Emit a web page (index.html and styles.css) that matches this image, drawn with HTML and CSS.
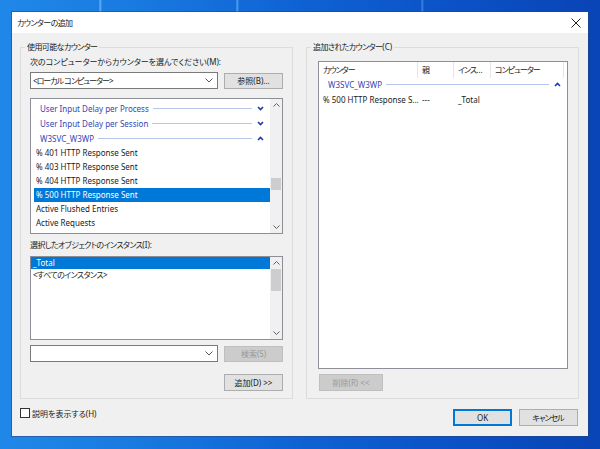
FILE: index.html
```html
<!DOCTYPE html>
<html lang="ja">
<head>
<meta charset="utf-8">
<title>カウンターの追加</title>
<link rel="stylesheet" href="styles.css">
</head>
<body>
<div class="desktop">
  <div class="window">
    <div class="titlebar">
      <span class="title kana">カウンターの追加</span>
      <svg class="close" width="10" height="10" viewBox="0 0 10 10"><path d="M0.5 0.5L9.5 9.5M9.5 0.5L0.5 9.5" stroke="#222" stroke-width="1" fill="none"/></svg>
    </div>
    <div class="main">
      <fieldset class="group group-left">
        <legend><span class="kana">使用可能なカウンター</span></legend>
        <div class="label">次のコンピューターからカウンターを選んでください(M):</div>
        <div class="row row-first">
          <div class="combo"><span><span class="kana-tight">&lt;ローカル コンピューター</span>&gt;</span><svg width="8" height="5" viewBox="0 0 8 5"><path d="M0.5 0.5L4 4L7.5 0.5" stroke="#555" stroke-width="1" fill="none"/></svg></div>
          <div class="btn">参照(B)...</div>
        </div>
        <div class="listbox counters">
          <div class="items items-counters">
            <div class="grp"><span>User Input Delay per Process</span><i class="line"></i><svg class="chev" width="7" height="5" viewBox="0 0 7 5"><path d="M1 1L3.5 3.5L6 1" stroke="#1c3aa8" stroke-width="1.6" fill="none"/></svg></div>
            <div class="grp"><span>User Input Delay per Session</span><i class="line"></i><svg class="chev" width="7" height="5" viewBox="0 0 7 5"><path d="M1 1L3.5 3.5L6 1" stroke="#1c3aa8" stroke-width="1.6" fill="none"/></svg></div>
            <div class="grp"><span>W3SVC_W3WP</span><i class="line"></i><svg class="chev" width="7" height="5" viewBox="0 0 7 5"><path d="M1 4L3.5 1.5L6 4" stroke="#1c3aa8" stroke-width="1.6" fill="none"/></svg></div>
            <div class="item">% 401 HTTP Response Sent</div>
            <div class="item">% 403 HTTP Response Sent</div>
            <div class="item">% 404 HTTP Response Sent</div>
            <div class="item sel">% 500 HTTP Response Sent</div>
            <div class="item">Active Flushed Entries</div>
            <div class="item">Active Requests</div>
          </div>
          <div class="vscroll">
            <div class="arrow"><svg width="7" height="4" viewBox="0 0 7 4"><path d="M0.5 3.5L3.5 0.5L6.5 3.5" stroke="#606060" stroke-width="1" fill="none"/></svg></div>
            <div class="thumb thumb-counters"></div>
            <div class="spacer"></div>
            <div class="arrow"><svg width="7" height="4" viewBox="0 0 7 4"><path d="M0.5 0.5L3.5 3.5L6.5 0.5" stroke="#606060" stroke-width="1" fill="none"/></svg></div>
          </div>
        </div>
        <div class="label label-inst"><span class="kana">選択したオブジェクトのインスタンス</span>(I):</div>
        <div class="listbox instances">
          <div class="items">
            <div class="inst sel">_Total</div>
            <div class="inst"><span class="kana">&lt;すべてのインスタンス</span>&gt;</div>
          </div>
          <div class="vscroll">
            <div class="arrow"><svg width="7" height="4" viewBox="0 0 7 4"><path d="M0.5 3.5L3.5 0.5L6.5 3.5" stroke="#606060" stroke-width="1" fill="none"/></svg></div>
            <div class="thumb thumb-inst"></div>
            <div class="spacer"></div>
            <div class="arrow"><svg width="7" height="4" viewBox="0 0 7 4"><path d="M0.5 0.5L3.5 3.5L6.5 0.5" stroke="#606060" stroke-width="1" fill="none"/></svg></div>
          </div>
        </div>
        <div class="row row-search">
          <div class="combo"><span></span><svg width="8" height="5" viewBox="0 0 8 5"><path d="M0.5 0.5L4 4L7.5 0.5" stroke="#555" stroke-width="1" fill="none"/></svg></div>
          <div class="btn disabled">検索(S)</div>
        </div>
        <div class="row row-add">
          <div class="btn btn-tall">追加(D) &gt;&gt;</div>
        </div>
      </fieldset>
      <fieldset class="group group-right">
        <legend><span class="kana">追加されたカウンター</span>(C)</legend>
        <div class="listview">
          <div class="lv-header">
            <div class="hcell"><span class="kana-tight">カウンタ</span>ー</div>
            <div class="hcell">親</div>
            <div class="hcell"><span class="kana-tight">インス</span>...</div>
            <div class="hcell"><span class="kana-tight">コンピュータ</span>ー</div>
          </div>
          <div class="lv-group"><span>W3SVC_W3WP</span><i class="line"></i><svg class="chev" width="7" height="5" viewBox="0 0 7 5"><path d="M1 4L3.5 1.5L6 4" stroke="#1c3aa8" stroke-width="1.6" fill="none"/></svg></div>
          <div class="lv-row">
            <div class="cell">% 500 HTTP Response S...</div>
            <div class="cell">---</div>
            <div class="cell">_Total</div>
            <div class="cell"></div>
          </div>
        </div>
        <div class="btn disabled btn-remove">削除(R) &lt;&lt;</div>
      </fieldset>
    </div>
    <div class="footer">
      <div class="check"><span class="box"></span><span>説明を表示する(H)</span></div>
      <div class="actions">
        <div class="btn btn-tall default">OK</div>
        <div class="btn btn-tall"><span class="kana-tight">キャンセ</span>ル</div>
      </div>
    </div>
  </div>
</div>
</body>
</html>
```
FILE: styles.css
```css
html, body {
  margin: 0;
  padding: 0;
}

body {
  width: 600px;
  height: 449px;
  overflow: hidden;
  background:
    linear-gradient(90deg, transparent 99px, rgba(140, 210, 255, 0.7) 100px, transparent 102px, transparent 236px, rgba(140, 210, 255, 0.6) 237px, transparent 239px, transparent 421px, rgba(120, 190, 255, 0.5) 422px, transparent 424px) top left / 600px 12px no-repeat,
    linear-gradient(90deg, #2088e8 0%, #1878df 25%, #0f62d3 50%, #0b52c6 75%, #0944b6 100%);
}

.desktop {
  width: 600px;
  height: 449px;
  padding: 12px;
  box-sizing: border-box;
}

.window {
  width: 576px;
  height: 424px;
  background: #f0f0f0;
  display: flex;
  flex-direction: column;
  box-shadow: 0 0 0 1px rgba(40, 70, 120, 0.55);
  font-family: "Noto Sans", "Noto Sans CJK JP", sans-serif;
  font-size: 8px;
  color: #1a1a1a;
  font-feature-settings: "palt";
}

.kana {
  letter-spacing: -0.6px;
}

.kana-tight {
  letter-spacing: -1px;
}

.titlebar {
  height: 21px;
  flex: none;
  background: #fff;
  display: flex;
  align-items: center;
  justify-content: space-between;
  padding: 0 7px 0 5px;
}

.title {
  font-size: 8px;
  line-height: 12px;
}

.main {
  display: flex;
  gap: 13px;
  padding: 8px 9px 0 8px;
}

.group {
  margin: 0;
  width: 273px;
  height: 358px;
  box-sizing: border-box;
  border: 1px solid #dcdcdc;
  min-width: 0;
}

.group legend {
  padding: 0 2px;
  line-height: 12px;
  font-size: 8px;
}

.group-left {
  padding: 3px 9px 0 9px;
}

.group-left legend {
  margin-left: -5px;
}

.group-right {
  padding: 8px 11px 0 11px;
}

.group-right legend {
  margin-left: -7px;
}

.label {
  line-height: 12px;
  white-space: nowrap;
}

.label-inst {
  margin-top: 5px;
}

.row {
  display: flex;
  gap: 6px;
  align-items: center;
}

.row-first {
  margin-top: 4px;
}

.row-search {
  margin-top: 5px;
}

.row-add {
  margin-top: 12px;
  justify-content: flex-end;
}

.combo {
  width: 188px;
  height: 17px;
  box-sizing: border-box;
  border: 1px solid #7a7a7a;
  background: #fff;
  display: flex;
  align-items: center;
  justify-content: space-between;
  padding: 0 4px 0 2px;
  white-space: nowrap;
}

.btn {
  width: 59px;
  height: 16px;
  box-sizing: border-box;
  border: 1px solid #adadad;
  background: #e1e1e1;
  display: flex;
  align-items: center;
  justify-content: center;
  white-space: nowrap;
}

.btn-tall {
  height: 17px;
}

.btn.disabled {
  background: #cccccc;
  border-color: #bfbfbf;
  color: #9a9a9a;
}

.btn.default {
  border: 1px solid #0078d7;
  box-shadow: inset 0 0 0 1px #0078d7;
}

.listbox {
  width: 253px;
  box-sizing: border-box;
  border: 1px solid #8c8f96;
  background: #fff;
  display: flex;
}

.counters {
  margin-top: 9px;
  height: 136px;
}

.instances {
  margin-top: 5px;
  height: 84px;
}

.items {
  flex: 1;
  overflow: hidden;
  min-width: 0;
}

.items-counters {
  padding-top: 2px;
}

.grp {
  height: 15px;
  display: flex;
  align-items: center;
  padding-left: 9px;
  color: #3346b4;
  white-space: nowrap;
}

.line {
  flex: 1;
  height: 1px;
  background: #b7c6ea;
  margin: 0 5px 0 4px;
}

.chev {
  flex: none;
  margin-right: 6px;
}

.item {
  height: 14px;
  line-height: 14px;
  margin-left: 3px;
  padding-left: 2px;
  white-space: nowrap;
}

.inst {
  height: 12px;
  line-height: 12px;
  padding-left: 2px;
  white-space: nowrap;
}

.sel {
  background: #0078d7;
  color: #fff;
}

.vscroll {
  width: 12px;
  flex: none;
  background: #f0f0f0;
  display: flex;
  flex-direction: column;
}

.arrow {
  height: 12px;
  display: flex;
  align-items: center;
  justify-content: center;
  flex: none;
}

.thumb {
  margin: 0 1px;
  background: #cdcdcd;
  flex: none;
}

.thumb-counters {
  margin-top: 67px;
  height: 12px;
}

.thumb-inst {
  height: 22px;
}

.spacer {
  flex: 1;
}

.listview {
  width: 250px;
  height: 308px;
  box-sizing: border-box;
  border: 1px solid #8c8f96;
  background: #fff;
}

.lv-header,
.lv-row {
  display: grid;
  grid-template-columns: 99px 36px 37px 73px;
}

.lv-header {
  height: 16px;
}

.hcell {
  border-right: 1px solid #e5e5e5;
  padding-left: 4px;
  line-height: 16px;
  white-space: nowrap;
  overflow: hidden;
}

.lv-group {
  height: 13px;
  display: flex;
  align-items: center;
  padding-left: 9px;
  color: #3346b4;
  white-space: nowrap;
}

.lv-row {
  margin-top: 2px;
  height: 14px;
}

.cell {
  padding-left: 4px;
  line-height: 14px;
  white-space: nowrap;
}

.btn-remove {
  margin-top: 5px;
  margin-left: 1px;
  width: 64px;
  height: 17px;
}

.footer {
  flex: 1;
  display: flex;
  align-items: flex-start;
  justify-content: space-between;
  padding: 10px 10px 0 8px;
}

.check {
  display: flex;
  align-items: center;
  gap: 2px;
  margin-top: -1px;
  height: 10px;
  white-space: nowrap;
}

.box {
  width: 10px;
  height: 10px;
  box-sizing: border-box;
  border: 1px solid #333;
  background: #fff;
}

.actions {
  display: flex;
  gap: 7px;
}
```
